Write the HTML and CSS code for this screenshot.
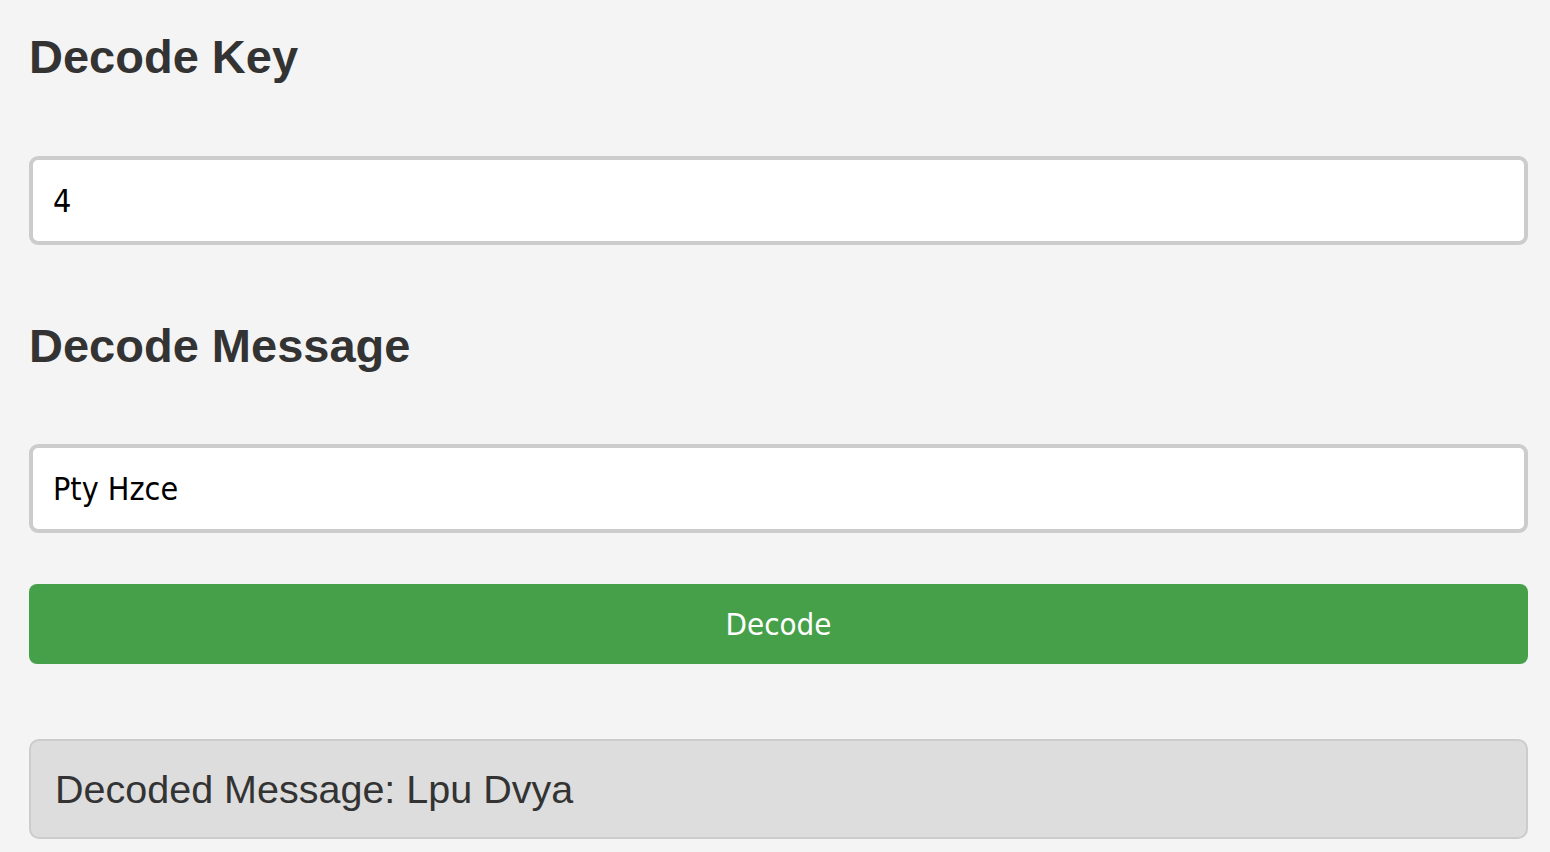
FILE: index.html
```html
<!DOCTYPE html>
<html lang="en">
<head>
<meta charset="utf-8">
<title>Decode</title>
<link rel="stylesheet" href="styles.css">
</head>
<body>
<main class="container">
  <h2 class="title title-first">Decode Key</h2>
  <input class="field field-key" type="text" value="4">
  <h2 class="title title-second">Decode Message</h2>
  <input class="field field-msg" type="text" value="Pty Hzce">
  <button class="btn" type="button">Decode</button>
  <div class="result">Decoded Message: Lpu Dvya</div>
</main>
</body>
</html>
```
FILE: styles.css
```css
* { box-sizing: border-box; }
html, body { margin: 0; padding: 0; background: #f4f4f4; }
.container {
  display: flex;
  flex-direction: column;
  padding: 30px 22px 0 29px;
}
.title {
  margin: 0;
  font-family: "Liberation Sans", Arial, sans-serif;
  font-weight: bold;
  font-size: 47px;
  line-height: 54px;
  color: #333;
}
.title-first { margin-bottom: 72px; }
.title-second { margin-top: 74px; margin-bottom: 71px; }
.field {
  display: block;
  width: 100%;
  height: 89px;
  margin: 0;
  padding: 0 20px;
  border: 4px solid #ccc;
  border-radius: 9px;
  background: #fff;
  font-family: "DejaVu Sans Condensed", "DejaVu Sans", sans-serif;
  font-size: 32px;
  color: #000;
  outline: none;
}
.btn {
  display: block;
  width: 100%;
  height: 80px;
  margin: 51px 0 0;
  border: none;
  border-radius: 8px;
  background: #46a049;
  color: #fff;
  font-family: "DejaVu Sans Condensed", "DejaVu Sans", sans-serif;
  font-size: 31px;
  padding: 0;
}
.result {
  display: flex;
  align-items: center;
  height: 100px;
  margin-top: 75px;
  padding: 0 24px;
  border: 2px solid #ccc;
  border-radius: 10px;
  background: #ddd;
  font-family: "Liberation Sans", Arial, sans-serif;
  font-size: 39.5px;
  color: #333;
}
```
